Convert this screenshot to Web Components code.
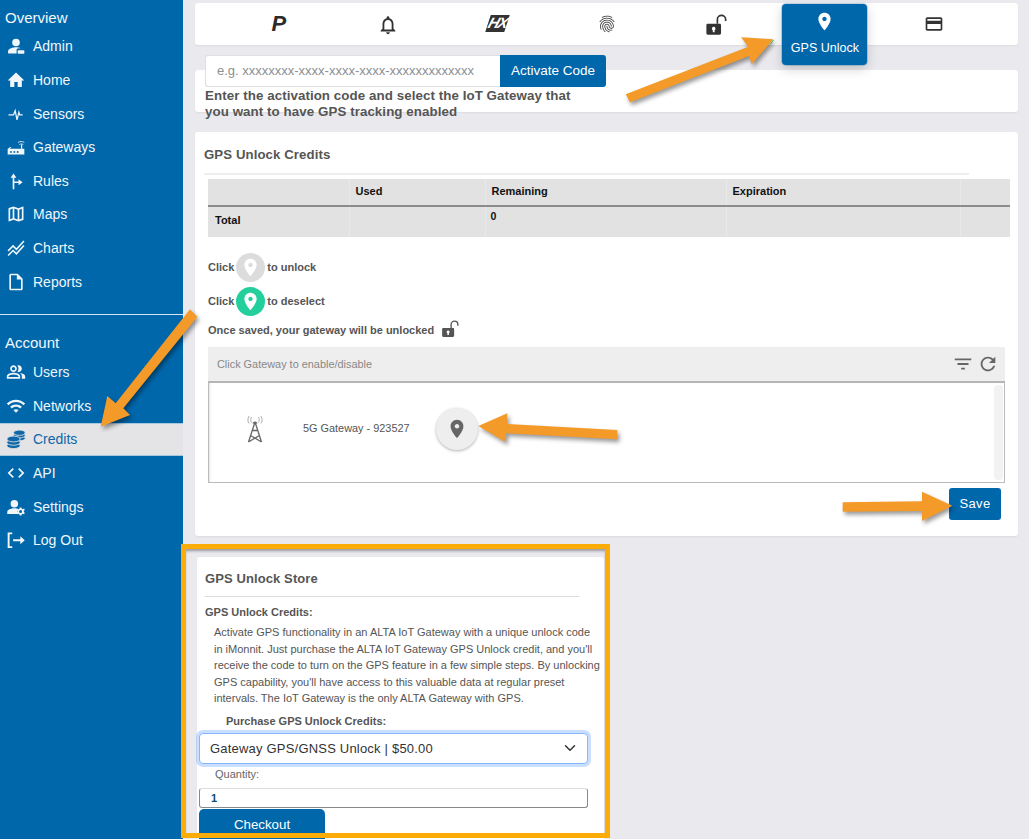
<!DOCTYPE html>
<html lang="en">
<head>
<meta charset="utf-8">
<title>GPS Unlock</title>
<style>
html,body{margin:0;padding:0;height:839px;overflow:hidden;background:#e9e9ee;font-family:"Liberation Sans",Arial,sans-serif;}
</style>
</head>
<body>
<app-shell>
  <side-nav slot="nav">
    <nav-title>Overview</nav-title>
    <nav-item icon="admin">Admin</nav-item>
    <nav-item icon="home">Home</nav-item>
    <nav-item icon="pulse">Sensors</nav-item>
    <nav-item icon="router">Gateways</nav-item>
    <nav-item icon="rules">Rules</nav-item>
    <nav-item icon="map">Maps</nav-item>
    <nav-item icon="chart">Charts</nav-item>
    <nav-item icon="file">Reports</nav-item>
    <nav-rule></nav-rule>
    <nav-title>Account</nav-title>
    <nav-item icon="people">Users</nav-item>
    <nav-item icon="wifi">Networks</nav-item>
    <nav-item icon="coins" active>Credits</nav-item>
    <nav-item icon="code">API</nav-item>
    <nav-item icon="usergear">Settings</nav-item>
    <nav-item icon="logout">Log Out</nav-item>
  </side-nav>

  <tab-bar>
    <tab-item><span class="p" slot="glyph">P</span></tab-item>
    <tab-item icon="bell" style="--is:22px"></tab-item>
    <tab-item><hx-logo slot="glyph"></hx-logo></tab-item>
    <tab-item icon="finger"></tab-item>
    <tab-item icon="lockopen" style="--is:22px"></tab-item>
    <tab-item icon="pin" active label="GPS Unlock"></tab-item>
    <tab-item icon="card"></tab-item>
  </tab-bar>

  <activate-panel></activate-panel>
  <credits-panel></credits-panel>
  <store-panel></store-panel>

  <annotation-layer slot="over"></annotation-layer>
</app-shell>

<script>
const ICONS = {
  admin:'<path d="M12 3.2a4.6 4.6 0 1 1 0 9.2 4.6 4.6 0 0 1 0-9.2zM2.5 21v-2.6c0-3.4 6.3-4.9 9.5-4.9 1.6 0 4.100.4 6 1.300l-3 0c-1.400 0-2.300 1-2.300 2.300V21z"/><rect x="14" y="17" width="8" height="4.200" rx=".8"/>',
  home:'<path d="M10 20.500v-6h4v6h5v-8h3L12 3 2 12.500h3v8z"/>',
  pulse:'<path d="M3 13h6l2-5 2.200 11 2.300-9 1 3h3.500" fill="none" stroke="currentColor" stroke-width="1.500"/>',
  router:'<path d="M2 21v-6.500l3-2.500h1.500l-1.800 2H22v7z"/><g fill="#0067ab"><rect x="5" y="17" width="2" height="2"/><rect x="9" y="17" width="2" height="2"/><rect x="13" y="17" width="2" height="2"/></g><rect x="18" y="9" width="1.400" height="5"/><path d="M14.500 6.500c2.400-1.400 5-1.400 7.500 0M16 9c1.500-.9 3.200-.9 4.800 0" fill="none" stroke="currentColor" stroke-width="1"/>',
  rules:'<path d="M9 3L5.500 8H8v14h2v-7.500l5 0V17l5-3.500L15 10v2.500h-5V8h2.500z"/>',
  map:'<path d="M20.500 3l-.16.03L15 5.100 9 3 3.360 4.900c-.21.070-.36.250-.36.480V20.500c0 .28.220.5.500.5l.16-.03L9 18.900l6 2.100 5.640-1.900c.21-.07.36-.25.36-.48V3.500c0-.28-.22-.5-.5-.5zM10 5.470l4 1.400v11.660l-4-1.400V5.470zm-5 .99l3-1.010v11.700l-3 1.160V6.460zm14 11.080l-3 1.010V6.860l3-1.160v11.840z"/>',
  chart:'<path d="M2.500 15.500l6-6 4 4L21.500 3.500M2.500 21l6-6 4 4 9-10" fill="none" stroke="currentColor" stroke-width="1.900"/>',
  file:'<path d="M14 2H6c-1.100 0-2 .9-2 2v16c0 1.100.9 2 2 2h12c1.100 0 2-.9 2-2V8l-6-6zm4 18H6V4h7v5h5v11z"/>',
  people:'<path d="M16.670 13.130C18.040 14.060 19 15.320 19 17v3h4v-3c0-2.180-3.570-3.470-6.330-3.870zM15 12c2.210 0 4-1.790 4-4s-1.790-4-4-4c-.47 0-.91.100-1.330.24C14.500 5.270 15 6.580 15 8s-.5 2.730-1.330 3.760c.42.14.86.24 1.330.24zM9 12c2.210 0 4-1.790 4-4s-1.790-4-4-4-4 1.790-4 4 1.790 4 4 4zm0-6c1.100 0 2 .9 2 2s-.9 2-2 2-2-.9-2-2 .9-2 2-2zM9 13c-2.670 0-8 1.340-8 4v3h16v-3c0-2.660-5.330-4-8-4zm6 5H3v-.99C3.200 16.290 6.300 15 9 15s5.800 1.290 6 2z"/>',
  wifi:'<path d="M1 9l2 2c4.970-4.970 13.030-4.970 18 0l2-2C16.930 2.930 7.080 2.930 1 9zm8 8l3 3 3-3c-1.650-1.660-4.340-1.660-6 0zm-4-4l2 2c2.760-2.760 7.240-2.760 10 0l2-2C15.140 9.140 8.870 9.140 5 13z"/>',
  coins:'<g stroke="#e4e4e7" stroke-width="1"><ellipse cx="16" cy="11" rx="7" ry="3.200"/><ellipse cx="16" cy="7.500" rx="7" ry="3.200"/><ellipse cx="16" cy="4.500" rx="7" ry="3.200"/><ellipse cx="9" cy="20" rx="8" ry="3.500"/><ellipse cx="9" cy="16" rx="8" ry="3.500"/><ellipse cx="9" cy="12" rx="8" ry="3.500"/></g>',
  code:'<path d="M9.400 16.600L4.800 12l4.600-4.600L8 6l-6 6 6 6 1.400-1.400zm5.200 0l4.600-4.600-4.600-4.600L16 6l6 6-6 6-1.400-1.400z"/>',
  usergear:'<path d="M10 3.500a4.500 4.500 0 1 1 0 9 4.500 4.500 0 0 1 0-9zM1.500 20.500V18c0-3.200 5.600-4.500 8.500-4.500 1 0 2.200.15 3.400.45-.5 1.800-.2 4.500 1 6.550z"/><path fill-rule="evenodd" d="M18.500 12.500l.4 1.500 1.300.6 1.400-.7 1 1.700-1.200 1 .0 1.500 1.200 1-1 1.700-1.400-.7-1.300.6-.4 1.500h-2l-.4-1.500-1.300-.6-1.400.7-1-1.700 1.200-1 0-1.500-1.200-1 1-1.700 1.400.7 1.300-.6.4-1.500zM17.500 15.500a1.800 1.800 0 1 0 0 3.600 1.800 1.800 0 0 0 0-3.600z"/>',
  logout:'<path d="M2 3h5.500v2H4.300v14.500h3.200v2H2z"/><path d="M8.500 11h8.700V7.500l5.300 4.800-5.300 4.800v-3.600H8.500z"/>',
  bell:'<path d="M12 22c1.100 0 2-.9 2-2h-4c0 1.100.9 2 2 2zm6-6v-5c0-3.070-1.640-5.640-4.500-6.320V4c0-.83-.67-1.500-1.500-1.500s-1.500.67-1.500 1.500v.68C7.630 5.360 6 7.920 6 11v5l-2 2v1h16v-1l-2-2zm-2 1H8v-6c0-2.480 1.510-4.500 4-4.500s4 2.020 4 4.500v6z"/>',
  finger:'<path d="M17.810 4.470c-.08 0-.16-.02-.23-.06C15.660 3.420 14 3 12.010 3c-1.980 0-3.860.47-5.570 1.410-.24.13-.54.04-.68-.2-.13-.24-.04-.55.2-.68C7.820 2.520 9.860 2 12.010 2c2.130 0 3.990.47 6.030 1.520.25.13.34.43.21.67-.09.18-.26.28-.44.28zM3.500 9.720c-.1 0-.2-.03-.29-.09-.23-.16-.28-.47-.12-.7.99-1.400 2.250-2.500 3.750-3.270C9.980 4.040 14 4.030 17.150 5.650c1.500.77 2.760 1.860 3.750 3.250.16.220.11.540-.12.700-.23.160-.54.110-.7-.12-.9-1.260-2.040-2.250-3.390-2.940-2.870-1.470-6.540-1.470-9.400.010-1.360.7-2.500 1.700-3.400 2.960-.08.14-.23.21-.39.21zm6.250 12.070c-.13 0-.26-.05-.35-.15-.87-.87-1.340-1.430-2.010-2.640-.69-1.230-1.050-2.730-1.050-4.340 0-2.970 2.540-5.390 5.660-5.390s5.660 2.420 5.660 5.390c0 .28-.22.500-.5.500s-.5-.22-.5-.5c0-2.420-2.090-4.390-4.660-4.390s-4.660 1.970-4.660 4.390c0 1.440.32 2.770.93 3.850.64 1.150 1.080 1.640 1.850 2.420.19.2.19.51 0 .71-.11.1-.24.15-.37.15zm7.170-1.850c-1.190 0-2.240-.3-3.100-.89-1.490-1.010-2.380-2.650-2.380-4.390 0-.28.22-.5.5-.5s.5.220.5.500c0 1.410.72 2.740 1.940 3.560.71.48 1.540.71 2.540.71.24 0 .64-.03 1.040-.1.27-.05.53.13.58.41.05.27-.13.53-.41.58-.57.11-1.070.12-1.210.12zM14.910 22c-.04 0-.09-.01-.13-.02-1.590-.44-2.630-1.030-3.720-2.100-1.400-1.390-2.170-3.240-2.170-5.220 0-1.620 1.380-2.940 3.080-2.940 1.700 0 3.080 1.320 3.080 2.940 0 1.070.93 1.940 2.080 1.940s2.080-.87 2.080-1.940c0-3.770-3.250-6.830-7.250-6.830-2.840 0-5.440 1.580-6.610 4.030-.39.81-.59 1.760-.59 2.800 0 .78.07 2.010.67 3.610.1.26-.03.55-.29.64-.26.1-.55-.04-.64-.29-.49-1.310-.73-2.610-.73-3.960 0-1.200.23-2.290.68-3.240 1.330-2.790 4.280-4.600 7.510-4.600 4.550 0 8.250 3.510 8.250 7.830 0 1.620-1.380 2.940-3.080 2.940s-3.080-1.320-3.080-2.940c0-1.070-.93-1.940-2.080-1.940s-2.080.87-2.080 1.940c0 1.710.66 3.310 1.870 4.510.95.94 1.860 1.460 3.270 1.850.27.07.42.35.35.61-.05.23-.26.38-.47.38z"/>',
  lockopen:'<path fill-rule="evenodd" d="M3 10.500h13c.8 0 1.500.7 1.500 1.500v9c0 .8-.7 1.500-1.500 1.500H3c-.8 0-1.500-.7-1.500-1.500v-9c0-.8.7-1.500 1.500-1.500zm6.500 3.500a2 2 0 0 0-1 3.700V20h2v-2.300a2 2 0 0 0-1-3.700z"/><path d="M13.500 10.500V6a4.500 4.500 0 0 1 9 0v1.500" fill="none" stroke="currentColor" stroke-width="1.800"/>',
  pin:'<path d="M12 2C8.130 2 5 5.130 5 9c0 5.250 7 13 7 13s7-7.750 7-13c0-3.870-3.130-7-7-7zm0 9.500c-1.380 0-2.500-1.120-2.500-2.500s1.120-2.500 2.500-2.500 2.500 1.120 2.500 2.500-1.120 2.500-2.500 2.500z"/>',
  card:'<path d="M20 4H4c-1.110 0-1.990.89-1.990 2L2 18c0 1.110.89 2 2 2h16c1.110 0 2-.89 2-2V6c0-1.110-.89-2-2-2zm0 14H4v-6h16v6zm0-10H4V6h16v2z"/>',
  filter:'<path d="M10 18h4v-2h-4v2zM3 6v2h18V6H3zm3 7h12v-2H6v2z"/>',
  refresh:'<path d="M17.650 6.350C16.200 4.900 14.210 4 12 4c-4.420 0-7.990 3.580-7.990 8s3.570 8 7.990 8c3.730 0 6.840-2.550 7.730-6h-2.080c-.82 2.330-3.040 4-5.650 4-3.310 0-6-2.690-6-6s2.690-6 6-6c1.660 0 3.140.69 4.220 1.780L13 11h7V4l-2.350 2.350z"/>'
};

customElements.define('ui-icon', class extends HTMLElement {
  static get observedAttributes(){ return ['name']; }
  constructor(){
    super();
    this.attachShadow({mode:'open'}).innerHTML = `<style>:host{display:inline-flex;width:var(--s,20px);height:var(--s,20px);flex:none}svg{width:100%;height:100%;fill:currentColor;display:block}</style><svg viewBox="0 0 24 24"></svg>`;
  }
  attributeChangedCallback(){ this.shadowRoot.querySelector('svg').innerHTML = ICONS[this.getAttribute('name')] || ''; }
});

function define(name, html, extra) {
  const tpl = document.createElement('template');
  tpl.innerHTML = html;
  customElements.define(name, class extends HTMLElement {
    constructor() {
      super();
      this.attachShadow({mode:'open'}).appendChild(document.importNode(tpl.content, true));
    }
    connectedCallback(){ if (extra) extra.call(this, this.shadowRoot); }
  });
}

define('app-shell', `<style>
:host{display:flex;position:relative;width:1029px;height:839px;overflow:hidden;background:#e9e9ee}
.nav{flex:0 0 183px;height:839px}
main{flex:1;min-width:0;padding:3px 11px 0 12px;display:flex;flex-direction:column}
</style>
<div class="nav"><slot name="nav"></slot></div>
<main><slot></slot></main>
<slot name="over"></slot>`);

define('side-nav', `<style>:host{display:flex;flex-direction:column;height:100%;background:#0067ab;color:#fff;padding-top:3.700px;box-sizing:border-box}</style><slot></slot>`);
define('nav-title', `<style>:host{display:block;height:26px;line-height:27px;padding-left:5px;font-size:15px;color:#f2f7fb}</style><slot></slot>`);
define('nav-rule', `<style>:host{display:block;margin:16px 0 14px;border-top:1px solid #d5e6f2}</style>`);
define('nav-item', `<style>
:host{display:flex;align-items:center;height:33.600px;box-sizing:border-box;padding-left:6px;gap:7px;font-size:14px;color:#f0f6fa}
:host([active]){background:#e4e4e7;color:#0f67a8;box-shadow:inset 0 1px 0 #a8c8e0,inset 0 -1px 0 #a8c8e0}
ui-icon{--s:20px}
</style><ui-icon></ui-icon><span><slot></slot></span>`, function(r){ r.querySelector('ui-icon').setAttribute('name', this.getAttribute('icon')); });

define('tab-bar', `<style>
:host{display:grid;grid-template-columns:repeat(7,109.200px);justify-content:center;height:42px;background:#fff;border-radius:3px;box-shadow:0 1px 2px rgba(0,0,0,.06);position:relative;z-index:2;flex:none}
</style><slot></slot>`);
define('tab-item', `<style>
:host{display:flex;flex-direction:column;align-items:center;height:42px;padding-top:11px;box-sizing:border-box;color:#333}
:host([active]){height:61px;width:85px;justify-self:center;margin-top:1px;padding-top:7px;background:#0067ab;color:#fff;border-radius:4px;box-shadow:0 4px 12px rgba(0,0,0,.18),0 0 0 1px rgba(90,150,200,.35)}
ui-icon{--s:var(--is,20px)}
:host([active]) ui-icon{--s:21px}
.l{font-size:12.500px;line-height:15px;margin-top:9px;white-space:nowrap}
::slotted(.p){font:italic bold 22px/20px "Liberation Sans",sans-serif;color:#2b2b2b}
</style><slot name="glyph"><ui-icon></ui-icon></slot><span class="l"></span>`, function(r){
  const n=this.getAttribute('icon'), l=this.getAttribute('label');
  if(n) r.querySelector('ui-icon').setAttribute('name',n);
  r.querySelector('.l').textContent = l||'';
  if(!l) r.querySelector('.l').remove();
});
define('hx-logo', `<style>
:host{display:block;width:19px;height:17px;margin-top:1px;background:#333;transform:skewX(-18deg);color:#fff;font:italic bold 15px/16px "Liberation Sans",sans-serif;text-align:center;letter-spacing:-1.500px}
</style>HX`);

define('activate-panel', `<style>
:host{display:block;height:42px;margin-top:25px;background:#fff;border-radius:3px;box-shadow:0 1px 2px rgba(0,0,0,.06);position:relative;flex:none}
.wrap{margin-top:-15px;padding-left:10px;position:absolute;width:420px}
.group{display:flex;height:32px;width:401px}
.field{flex:1;background:#fff;border:1px solid #dcdfe3;border-right:0;border-radius:3px 0 0 3px;box-sizing:border-box;font-size:13px;color:#8b8f94;line-height:30px;padding-left:11px;white-space:nowrap;overflow:hidden}
.btn{flex:0 0 106px;background:#0067ab;color:#fff;font-size:13.500px;line-height:32px;text-align:center;border-radius:0 3px 3px 0}
p{margin:1px 0 0;font-weight:700;font-size:13.330px;line-height:16px;color:#555;width:380px;letter-spacing:.07px}
</style><div class="wrap"><div class="group"><div class="field">e.g. xxxxxxxx-xxxx-xxxx-xxxx-xxxxxxxxxxxxx</div><div class="btn">Activate Code</div></div><p>Enter the activation code and select the IoT Gateway that you want to have GPS tracking enabled</p></div>`);

define('credits-panel', `<style>
:host{display:block;height:404px;margin-top:20px;background:#fff;border-radius:3px;box-shadow:0 1px 2px rgba(0,0,0,.06);padding:0 8px 0 9px;box-sizing:border-box;flex:none;color:#555}
h2{margin:0;padding-top:15px;height:26px;font-size:13.200px;line-height:16px;font-weight:700;letter-spacing:.1px;color:#555;box-sizing:content-box}
hr{margin:0 41px 4px 0;border:0;border-top:2px solid #eee;margin-top:0}
.in{padding:0 8px 0 4px}
table{border-collapse:collapse;table-layout:fixed;width:802px;font-size:11px;color:#111;background:#e2e2e2}
th,td{padding:0;text-align:left;font-weight:700;border-left:1px solid #e9e9e9;box-sizing:border-box}
tr:first-child th{height:27px;border-bottom:2px solid #8c8c8c;padding-bottom:3px}
th:first-child,td:first-child{border-left:0}
td{height:31px;vertical-align:top}
td.t{padding:7px 0 0 7px}
td.z{padding:3px 0 0 5px;font-size:10.500px}
th{padding-left:6px}
.line{display:flex;align-items:center;font-size:11px;font-weight:700;color:#555;gap:0}
.line.a{margin-top:15px;height:30px}
.line.b{margin-top:4px;height:30px}
.line.c{margin-top:3px;height:22px}
.dot{width:29px;height:29px;border-radius:50%;display:flex;align-items:center;justify-content:center;color:#fff;margin:0 2px 0 2px;--s:21px}
.dot.g{background:#dcdcdc}
.dot.v{background:#23cf9c}
.lock{color:#555;--s:18px;margin-left:7px;margin-top:-2px}
gateway-list{margin-top:6px}
.foot{display:flex;justify-content:flex-end;padding:5px 1px 0 0}
.save{width:52px;height:32px;background:#0067ab;color:#fff;border-radius:3px;font-size:13px;line-height:31px;text-align:center;letter-spacing:.3px}
</style>
<h2>GPS Unlock Credits</h2><hr>
<div class="in">
<table><colgroup><col style="width:141px"><col style="width:136px"><col style="width:241px"><col style="width:234px"><col style="width:50px"></colgroup>
<tr><th></th><th>Used</th><th>Remaining</th><th>Expiration</th><th></th></tr>
<tr><td class="t">Total</td><td></td><td class="z">0</td><td></td><td></td></tr></table>
<div class="line a"><span>Click</span><span class="dot g"><ui-icon name="pin"></ui-icon></span><span>to unlock</span></div>
<div class="line b"><span>Click</span><span class="dot v"><ui-icon name="pin"></ui-icon></span><span>to deselect</span></div>
<div class="line c"><span>Once saved, your gateway will be unlocked</span><ui-icon class="lock" name="lockopen"></ui-icon></div>
<gateway-list></gateway-list>
<div class="foot"><div class="save">Save</div></div>
</div>`);

define('gateway-list', `<style>
:host{display:block;width:797px;font-size:10.900px}
.head{height:34px;background:#eee;display:flex;align-items:center;padding:0 6px 0 9px;color:#888;box-sizing:border-box}
.head span{flex:1}
.head ui-icon{color:#666}
.f{--s:22px;margin-right:3px}.r{--s:22px}
.body{height:102px;box-sizing:border-box;border:1px solid #bcbcbc;border-top:2px solid #b5b5b5;box-shadow:inset 2px 0 2px -1px rgba(0,0,0,.12);display:flex;align-items:center;position:relative;color:#555;padding-bottom:8px}
.tw{width:18px;height:28px;margin-left:37px;flex:none}
.n{margin-left:39px;width:133px;flex:none;white-space:nowrap;margin-top:-1px}
.b{width:42px;height:42px;border-radius:50%;background:#eee;box-shadow:0 1px 3px rgba(0,0,0,.3);display:flex;align-items:center;justify-content:center;color:#666;--s:22px;flex:none;margin-top:0}
.sb{position:absolute;right:1px;top:2px;bottom:2px;width:9px;border-radius:4px;background:#f2f2f2}
</style>
<div class="head"><span>Click Gateway to enable/disable</span><ui-icon class="f" name="filter"></ui-icon><ui-icon class="r" name="refresh"></ui-icon></div>
<div class="body">
<svg class="tw" viewBox="0 0 18 28" fill="none" stroke="#666" stroke-width="1.300"><path d="M9 7L2.500 27M9 7l6.500 20M6 15.500h6M4.500 20.500l11 6.500M13.500 20.500L2.500 27"/><path d="M7 8.500a2.200 2.200 0 0 1 4 0"/><path d="M5.500 2c-1 1.700-1 3.800 0 5.500M12.500 2c1 1.700 1 3.800 0 5.500M3.200 1c-1.800 2.500-1.800 5.500 0 7.500M14.800 1c1.800 2.500 1.800 5.500 0 7.500" stroke="#999" stroke-width=".8"/></svg>
<span class="n">5G Gateway - 923527</span>
<span class="b"><ui-icon name="pin"></ui-icon></span>
<div class="sb"></div>
</div>`);

define('store-panel', `<style>
:host{display:block;width:407px;height:282px;margin-top:21px;margin-left:2px;background:#fff;border-radius:3px 3px 0 0;box-sizing:border-box;padding:0 0 0 8px;color:#555;font-size:11px;flex:none;position:relative}
h2{margin:0;padding-top:14px;font-size:13px;line-height:16px;font-weight:700;letter-spacing:.1px;height:12px;padding-bottom:0;box-sizing:content-box}
hr{margin:13px 25px 0 0;border:0;border-top:1px solid #ddd}
h3{margin:0;padding-top:8px;font-size:11px;line-height:14px;font-weight:700}
p{margin:5px 0 0 9px;line-height:16.500px;font-size:11px;width:387px}
.pl{font-weight:700;margin:7px 0 0 21px;line-height:14px}
.sel{margin:5px 0 0 -6px;width:389px;height:31px;box-sizing:border-box;background:#fff;border:1px solid #86b7fe;border-radius:4px;box-shadow:0 0 0 3px rgba(13,110,253,.22);display:flex;align-items:center;justify-content:space-between;padding:0 11px 0 10px;color:#333;font-size:13px;letter-spacing:.2px}
.sel svg{width:12px;height:12px}
.q{margin:3px 0 0 10px;line-height:14px;color:#666}
.inp{margin:7px 0 0 -6px;width:389px;height:20px;box-sizing:border-box;border:1px solid #888;border-top-color:#ddd;border-radius:3px;line-height:19px;padding-left:11px;font-weight:700;color:#124b78;font-size:11px}
.co{margin:1px 0 0 -6px;width:126px;height:40px;background:#0067ab;color:#fff;font-size:13.300px;border-radius:5px 5px 0 0;text-align:center;line-height:32px}
</style>
<h2>GPS Unlock Store</h2><hr>
<h3>GPS Unlock Credits:</h3>
<p>Activate GPS functionality in an ALTA IoT Gateway with a unique unlock code in iMonnit. Just purchase the ALTA IoT Gateway GPS Unlock credit, and you'll receive the code to turn on the GPS feature in a few simple steps. By unlocking GPS capability, you'll have access to this valuable data at regular preset intervals. The IoT Gateway is the only ALTA Gateway with GPS.</p>
<div class="pl">Purchase GPS Unlock Credits:</div>
<div class="sel"><span>Gateway GPS/GNSS Unlock | $50.00</span><svg viewBox="0 0 16 16" fill="none" stroke="#333" stroke-width="2" stroke-linecap="round" stroke-linejoin="round"><path d="M2 5l6 6 6-6"/></svg></div>
<div class="q">Quantity:</div>
<div class="inp">1</div>
<div class="co">Checkout</div>`);

define('annotation-layer', `<style>
:host{position:absolute;inset:0;pointer-events:none;z-index:5;display:block}
.frame{position:absolute;left:181px;top:544px;width:429px;height:294px;box-sizing:border-box;border:5.500px solid #fbac07;box-shadow:inset 0 3px 3px -1px rgba(0,0,0,.35)}
svg{position:absolute;inset:0;width:1029px;height:839px}
polygon{fill:#f49a29;filter:drop-shadow(2px 3px 2px rgba(0,0,0,.4))}
</style>
<div class="frame"></div>
<svg viewBox="0 0 1029 839">
<polygon points="625.700,94.300 748.300,46.700 741,37.300 773.300,39.300 751.700,64.300 749,56 630,102.300"/>
<path d="M770.500 44l3-4" stroke="#3cb43c" stroke-width="1"/>
<polygon points="190,309.300 197.300,316.700 123.300,408.300 130,415 100.700,426.700 107.300,396 115.700,403.300"/>
<polygon points="478.300,426 507.300,413.300 507.300,424 617.300,430 617.300,439.300 506,433.300 506,442.300"/>
<polygon points="842.700,502.300 922,501.300 922,491.700 952.300,505.700 922,521 922,511 842.700,511.700"/>
</svg>`);
</script>
</body>
</html>
